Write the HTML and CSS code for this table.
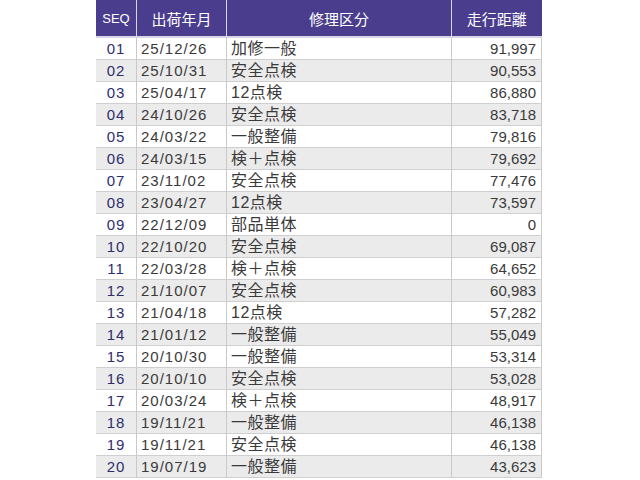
FILE: index.html
```html
<!DOCTYPE html>
<html lang="ja">
<head>
<meta charset="utf-8">
<link rel="stylesheet" href="styles.css">
</head>
<body>
<table class="history">
<thead>
<tr><th class="c-seq">SEQ</th><th class="c-date">出荷年月</th><th class="c-type">修理区分</th><th class="c-dist">走行距離</th></tr>
</thead>
<tbody>
<tr><td class="seq">01</td><td class="date">25/12/26</td><td class="type">加修一般</td><td class="num">91,997</td></tr>
<tr><td class="seq">02</td><td class="date">25/10/31</td><td class="type">安全点検</td><td class="num">90,553</td></tr>
<tr><td class="seq">03</td><td class="date">25/04/17</td><td class="type">12点検</td><td class="num">86,880</td></tr>
<tr><td class="seq">04</td><td class="date">24/10/26</td><td class="type">安全点検</td><td class="num">83,718</td></tr>
<tr><td class="seq">05</td><td class="date">24/03/22</td><td class="type">一般整備</td><td class="num">79,816</td></tr>
<tr><td class="seq">06</td><td class="date">24/03/15</td><td class="type">検＋点検</td><td class="num">79,692</td></tr>
<tr><td class="seq">07</td><td class="date">23/11/02</td><td class="type">安全点検</td><td class="num">77,476</td></tr>
<tr><td class="seq">08</td><td class="date">23/04/27</td><td class="type">12点検</td><td class="num">73,597</td></tr>
<tr><td class="seq">09</td><td class="date">22/12/09</td><td class="type">部品単体</td><td class="num">0</td></tr>
<tr><td class="seq">10</td><td class="date">22/10/20</td><td class="type">安全点検</td><td class="num">69,087</td></tr>
<tr><td class="seq">11</td><td class="date">22/03/28</td><td class="type">検＋点検</td><td class="num">64,652</td></tr>
<tr><td class="seq">12</td><td class="date">21/10/07</td><td class="type">安全点検</td><td class="num">60,983</td></tr>
<tr><td class="seq">13</td><td class="date">21/04/18</td><td class="type">12点検</td><td class="num">57,282</td></tr>
<tr><td class="seq">14</td><td class="date">21/01/12</td><td class="type">一般整備</td><td class="num">55,049</td></tr>
<tr><td class="seq">15</td><td class="date">20/10/30</td><td class="type">一般整備</td><td class="num">53,314</td></tr>
<tr><td class="seq">16</td><td class="date">20/10/10</td><td class="type">安全点検</td><td class="num">53,028</td></tr>
<tr><td class="seq">17</td><td class="date">20/03/24</td><td class="type">検＋点検</td><td class="num">48,917</td></tr>
<tr><td class="seq">18</td><td class="date">19/11/21</td><td class="type">一般整備</td><td class="num">46,138</td></tr>
<tr><td class="seq">19</td><td class="date">19/11/21</td><td class="type">安全点検</td><td class="num">46,138</td></tr>
<tr><td class="seq">20</td><td class="date">19/07/19</td><td class="type">一般整備</td><td class="num">43,623</td></tr>
</tbody>
</table>
</body>
</html>
```
FILE: styles.css
```css
html, body {
  margin: 0;
  padding: 0;
  background: #ffffff;
}
body {
  font-family: "Liberation Sans", "Noto Sans CJK JP", sans-serif;
  color: #3a3a3a;
}
.history {
  margin-left: 96px;
  border-collapse: collapse;
  table-layout: fixed;
  width: 446px;
}
.history th {
  background: #4b3d8e;
  color: #ffffff;
  font-weight: normal;
  font-size: 15px;
  height: 36px;
  padding: 0;
  border-left: 1px solid #d8d6e6;
  border-bottom: 2px solid #d8d6e6;
  text-align: center;
  vertical-align: middle;
}
.history th:first-child { border-left: none; }
.history th.c-seq { font-size: 13px; width: 40px; }
.history th.c-date { width: 89px; }
.history th.c-type { width: 224px; }
.history td {
  height: 21px;
  padding: 0 4px;
  font-size: 15px;
  line-height: 21px;
  border-left: 1px solid #c9c9c9;
  border-bottom: 1px solid #cfcfcf;
  white-space: nowrap;
  vertical-align: middle;
}
.history td:first-child { border-left: none; }
.history tbody tr:nth-child(even) td { background: #ebebeb; }
.history td.seq {
  text-align: center;
  color: #2e2e6e;
  padding: 0;
  letter-spacing: 1px;
}
.history td.date {
  letter-spacing: 1px;
}
.history td.type {
  font-size: 16px;
  letter-spacing: 0.5px;
}
.history td.num {
  text-align: right;
  padding-right: 5px;
}
.history td:last-child { border-right: 1px solid #c9c9c9; }
```
